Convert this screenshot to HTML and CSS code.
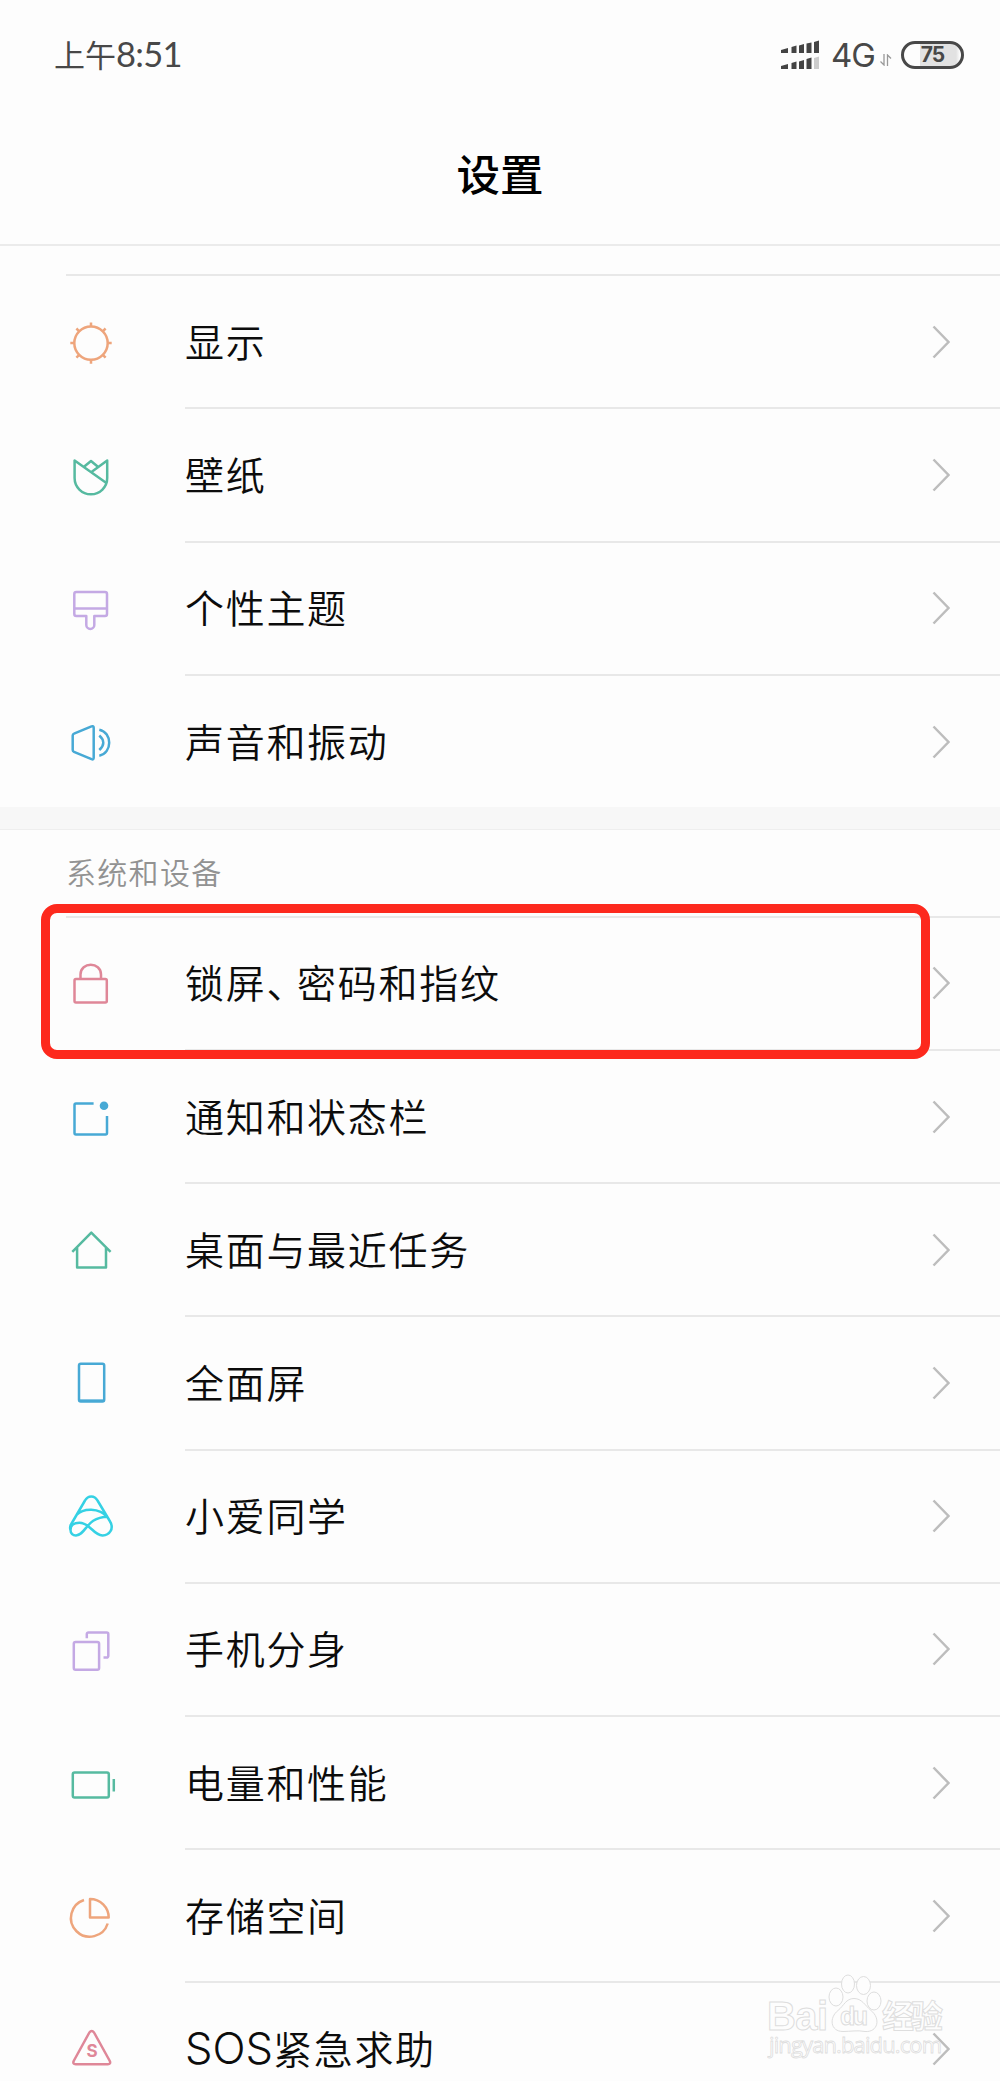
FILE: index.html
```
<!DOCTYPE html>
<html lang="zh-CN">
<head>
<meta charset="utf-8">
<title>设置</title>
<link rel="stylesheet" href="styles.css">
</head>
<body>
<main class="screen">
  <header class="header">
    <div class="status">
      <div class="time">上午<span class="digits">8:51</span></div>
      <div class="status-right">
        <svg class="signal" width="38" height="30" viewBox="0 0 38 30">
          <path d="M0 10l7-2v5H0zM10.500 7l5-1.500v7.500h-5zM18 5.500l5-1.500v9h-5zM25.500 3.500l5-1v10.500h-5zM33 2l5-1.500V13h-5zM0 26l7-2v5H0zM10.500 23l5-1.500V29h-5zM18 21.500l5-1.500v9h-5zM25.500 19l5-1.500V29h-5z" fill="#444"/>
          <path d="M33 18l5-1.500V29h-5z" fill="#ccc"/>
        </svg>
        <span class="network">4G</span>
        <svg class="arrows" width="12" height="12" viewBox="0 0 12 12" fill="none" stroke="#999" stroke-width="1.300"><path d="M4 0v11L.5 7.500M7.500 12V1L11 4.500"/></svg>
        <span class="battery"><span class="battery-text">75</span></span>
      </div>
    </div>
    <h1 class="title">设置</h1>
  </header>

  <section class="group group-first">
    <div class="row">
      <svg class="icon orange" viewBox="0 0 60 60"><circle cx="30" cy="31.100" r="16.700"/><path d="M30 14.400v-4M30 47.800v4M13.300 31.100h-4M46.700 31.100h4M18.200 19.300l-2.800-2.800M41.800 19.300l2.800-2.800M18.200 42.900l-2.800 2.800M41.800 42.900l2.800 2.800"/></svg>
      <div class="label">显示</div><svg class="chevron" viewBox="0 0 18 34"><path d="M1.500 1.500L16.500 17 1.500 32.500"/></svg>
    </div>
    <div class="row">
      <svg class="icon green" viewBox="0 0 60 60"><path d="M44.700 37.500L13.600 15.500V33a16.300 16.300 0 0 0 32.600 0V15.500L30.800 26.800M23.300 21.500l6.700-5.500 6.900 5.800"/></svg>
      <div class="label">壁纸</div><svg class="chevron" viewBox="0 0 18 34"><path d="M1.500 1.500L16.500 17 1.500 32.500"/></svg>
    </div>
    <div class="row">
      <svg class="icon purple" viewBox="0 0 60 60"><path d="M25.300 37.900H15.300a2 2 0 0 1-2-2v-20a2 2 0 0 1 2-2h28.700a2 2 0 0 1 2 2v20a2 2 0 0 1-2 2H33.300v9a4 4 0 0 1-8 0zM13.300 30.500H46"/></svg>
      <div class="label">个性主题</div><svg class="chevron" viewBox="0 0 18 34"><path d="M1.500 1.500L16.500 17 1.500 32.500"/></svg>
    </div>
    <div class="row">
      <svg class="icon blue" viewBox="0 0 60 60"><path d="M13 21.700l17.500-7.300q2.200-.7 2.200 1.400v30q0 2.200-2.200 1.400L13 39.900q-1.300-.6-1.300-1.800V23.500q0-1.300 1.300-1.800zM38.300 23.500q8 7 0 14.500M38.300 17.700C51.500 20.500 51.500 41 38.300 43.700"/></svg>
      <div class="label">声音和振动</div><svg class="chevron" viewBox="0 0 18 34"><path d="M1.500 1.500L16.500 17 1.500 32.500"/></svg>
    </div>
  </section>

  <section class="group group-system">
    <h2 class="group-title">系统和设备</h2>
    <div class="row row-marked">
      <svg class="icon pink" viewBox="0 0 60 60"><rect x="13.500" y="25.900" width="32.300" height="23.500" rx="1.500"/><path d="M19.500 25.500v-4C19.500 8.500 40 8.500 40 21.500v4"/></svg>
      <div class="label">锁屏<span class="comma">、</span>密码和指纹</div><svg class="chevron" viewBox="0 0 18 34"><path d="M1.500 1.500L16.500 17 1.500 32.500"/></svg>
      <div class="marker"></div>
    </div>
    <div class="row">
      <svg class="icon blue" viewBox="0 0 60 60"><path d="M32.600 16.500H15a1.500 1.500 0 0 0-1.500 1.500v28a1.500 1.500 0 0 0 1.500 1.500h29.500A1.500 1.500 0 0 0 46 46V29"/><circle class="solid" cx="43" cy="18.700" r="4.300"/></svg>
      <div class="label">通知和状态栏</div><svg class="chevron" viewBox="0 0 18 34"><path d="M1.500 1.500L16.500 17 1.500 32.500"/></svg>
    </div>
    <div class="row">
      <svg class="icon green" viewBox="0 0 60 60"><path d="M11.300 31.800l19-19.200 19.300 19.200M16.100 27v20.500H45V27"/></svg>
      <div class="label">桌面与最近任务</div><svg class="chevron" viewBox="0 0 18 34"><path d="M1.500 1.500L16.500 17 1.500 32.500"/></svg>
    </div>
    <div class="row">
      <svg class="icon blue" viewBox="0 0 60 60"><rect x="18" y="10.800" width="25.200" height="37.800" rx="1.800"/><path d="M18.500 47.600h24"/></svg>
      <div class="label">全面屏</div><svg class="chevron" viewBox="0 0 18 34"><path d="M1.500 1.500L16.500 17 1.500 32.500"/></svg>
    </div>
    <div class="row">
      <svg class="icon cyan" viewBox="0 0 60 60"><path d="M10 38.500L24 14.500C27 9 33.500 9 36.500 14.500L48.500 34.500C54 43 48 49.500 41.500 49.400C32 49 29 36.700 18.500 36.700C12.500 36.700 9.500 40 9.500 44C9.500 47.500 12 49.500 15 49.400C25.500 49 24.500 31 47 30.700M15.500 29C22 22 38 21 47 31.500M9.500 44Q8.500 41 10 38.500"/></svg>
      <div class="label">小爱同学</div><svg class="chevron" viewBox="0 0 18 34"><path d="M1.500 1.500L16.500 17 1.500 32.500"/></svg>
    </div>
    <div class="row">
      <svg class="icon purple" viewBox="0 0 60 60"><rect x="12.800" y="22.900" width="25.300" height="27.800" rx="1.800"/><path d="M25.800 19.200v-4.200a1.600 1.600 0 0 1 1.600-1.600h18.300a1.600 1.600 0 0 1 1.600 1.600v22a1.600 1.600 0 0 1-1.600 1.600h-3.200"/></svg>
      <div class="label">手机分身</div><svg class="chevron" viewBox="0 0 18 34"><path d="M1.500 1.500L16.500 17 1.500 32.500"/></svg>
    </div>
    <div class="row">
      <svg class="icon green" viewBox="0 0 60 60"><rect x="11.800" y="19.500" width="36" height="25.100" rx="1.800"/><path d="M52.800 26v12.500"/></svg>
      <div class="label">电量和性能</div><svg class="chevron" viewBox="0 0 18 34"><path d="M1.500 1.500L16.500 17 1.500 32.500"/></svg>
    </div>
    <div class="row">
      <svg class="icon orange" viewBox="0 0 60 60"><path d="M23 14A18.800 18.800 0 1 0 46.700 37.500M29 13v18.600h18.700A18.700 18.700 0 0 0 29 13z"/></svg>
      <div class="label">存储空间</div><svg class="chevron" viewBox="0 0 18 34"><path d="M1.500 1.500L16.500 17 1.500 32.500"/></svg>
    </div>
    <div class="row">
      <svg class="icon pink" viewBox="0 0 60 60"><path d="M28.400 13.500q2.300-3 4.600 0l15.800 28.500q1.300 3.300-2 3.300H14.700q-3.300 0-2-3.300z"/><text class="sos" x="31" y="38.300">S</text></svg>
      <div class="label"><span class="latin">SOS</span>紧急求助</div><svg class="chevron" viewBox="0 0 18 34"><path d="M1.500 1.500L16.500 17 1.500 32.500"/></svg>
    </div>
  </section>

  <svg class="watermark" width="190" height="92" viewBox="0 0 190 92">
    <g class="paw"><ellipse cx="69" cy="24" rx="7" ry="9"/><ellipse cx="81" cy="11" rx="6.500" ry="9"/><ellipse cx="96.500" cy="12.500" rx="7" ry="9"/><ellipse cx="107" cy="28" rx="7" ry="9"/>
    <path d="M87 25.500c-8 0-10 7-16 12-9 7-8 21 5 21 8 0 14-1.500 22 0 13 1 16-13 6-21-6-5-9-12-17-12z"/></g>
    <text class="wm-brand" x="0" y="57" textLength="61">Bai</text>
    <text class="wm-du" x="73" y="52" textLength="28">du</text>
    <text class="wm-cjk" x="115" y="55" textLength="61">经验</text>
    <text class="wm-url" x="2" y="80" textLength="173">jingyan.baidu.com</text>
  </svg>
</main>
</body>
</html>
```
FILE: styles.css
```
* { box-sizing: border-box; }
body { margin: 0; background: #fdfdfd; }
.screen {
  position: relative;
  width: 1000px;
  height: 2081px;
  overflow: hidden;
  background: #fdfdfd;
  color: #0c0c0c;
  font-family: "Noto Sans CJK SC", sans-serif;
}
.header { height: 246px; border-bottom: 2px solid #ebebeb; }
.status {
  display: flex;
  justify-content: space-between;
  align-items: center;
  height: 110px;
  padding: 0 36px 0 54px;
  color: #484848;
}
.time { margin-top: -2px; font-size: 31px; line-height: 40px; white-space: nowrap; }
.digits { font-family: Lato, sans-serif; font-size: 34.500px; letter-spacing: -.7px; }
.status-right { display: flex; align-items: center; }
.signal { margin-right: 12px; }
.network { width: 46px; font: 33px/40px Inter, sans-serif; letter-spacing: -1px; }
.arrows { margin: 10px 9px 0 3px; }
.battery {
  display: flex;
  align-items: center;
  justify-content: center;
  width: 63px;
  height: 28px;
  border: 3px solid #484848;
  border-radius: 14px;
  background: linear-gradient(90deg, #fdfdfd 16px, #e2e2e2 16px, #e2e2e2 52px, #fdfdfd 56px);
}
.battery-text { font: bold 21px/22px Inter, sans-serif; letter-spacing: -1px; }
.title {
  margin: 31px 0 0;
  font-size: 43.500px;
  line-height: 64px;
  font-weight: 500;
  text-align: center;
  color: #000;
}
.group-first { margin: 28px 0 0; }
.row {
  position: relative;
  display: flex;
  align-items: center;
  height: 133.200px;
  padding: 0 50px 0 61px;
}
.row::before {
  content: "";
  position: absolute;
  top: 0;
  left: 185px;
  right: 0;
  height: 2px;
  background: #e8e8e8;
}
.group-first .row { height: 133.330px; }
.group-first .row:first-child::before,
.row-marked::before { left: 66px; }
.row-marked { z-index: 1; }
.icon {
  width: 60px;
  height: 60px;
  flex: none;
  margin-top: 2px;
  fill: none;
  stroke: currentColor;
  stroke-width: 2.500;
  stroke-linejoin: round;
}
.orange { color: #eea57c; }
.green { color: #56baa0; }
.purple { color: #c4a9e4; }
.blue { color: #47a9d5; }
.pink { color: #df8798; }
.cyan { color: #35d1e4; }
.solid { fill: currentColor; stroke: none; }
.sos { fill: currentColor; stroke: none; font: bold 17px Inter, sans-serif; text-anchor: middle; }
.label {
  flex: 1;
  margin: -2px 0 0 64px;
  font-size: 39px;
  letter-spacing: 1.700px;
  line-height: 58px;
  font-weight: 350;
  white-space: nowrap;
}
.comma { letter-spacing: -8.300px; }
.latin { font-family: Inter, "Liberation Sans", sans-serif; font-size: 43.500px; line-height: 50px; letter-spacing: 0; }
.chevron {
  width: 18px;
  height: 34px;
  flex: none;
  margin-top: 2px;
  fill: none;
  stroke: #bdbdbd;
  stroke-width: 2.500;
}
.group-system { border-top: 22.500px solid #f7f7f7; box-shadow: inset 0 1px #eee; }
.group-title {
  height: 86.500px;
  margin: 0;
  padding: 20px 66px 0;
  font-size: 30px;
  letter-spacing: 1.300px;
  line-height: 44px;
  font-weight: 350;
  color: #929292;
}
.marker {
  position: absolute;
  top: -12px;
  left: 41px;
  width: 889px;
  height: 155px;
  border: 9px solid #fd291d;
  border-radius: 16px;
}
.watermark {
  position: absolute;
  left: 767px;
  top: 1973px;
  fill: #fdfdfd;
  stroke: #dedede;
  stroke-width: 1;
}
.wm-brand { font: bold 40px "Liberation Sans", sans-serif; }
.wm-du { font: bold 25px "Liberation Sans", sans-serif; }
.wm-cjk { font: bold 32px "Noto Sans CJK SC", sans-serif; }
.wm-url { font: 22px "Open Sans", sans-serif; stroke-width: .8; fill-opacity: .3; }
```
